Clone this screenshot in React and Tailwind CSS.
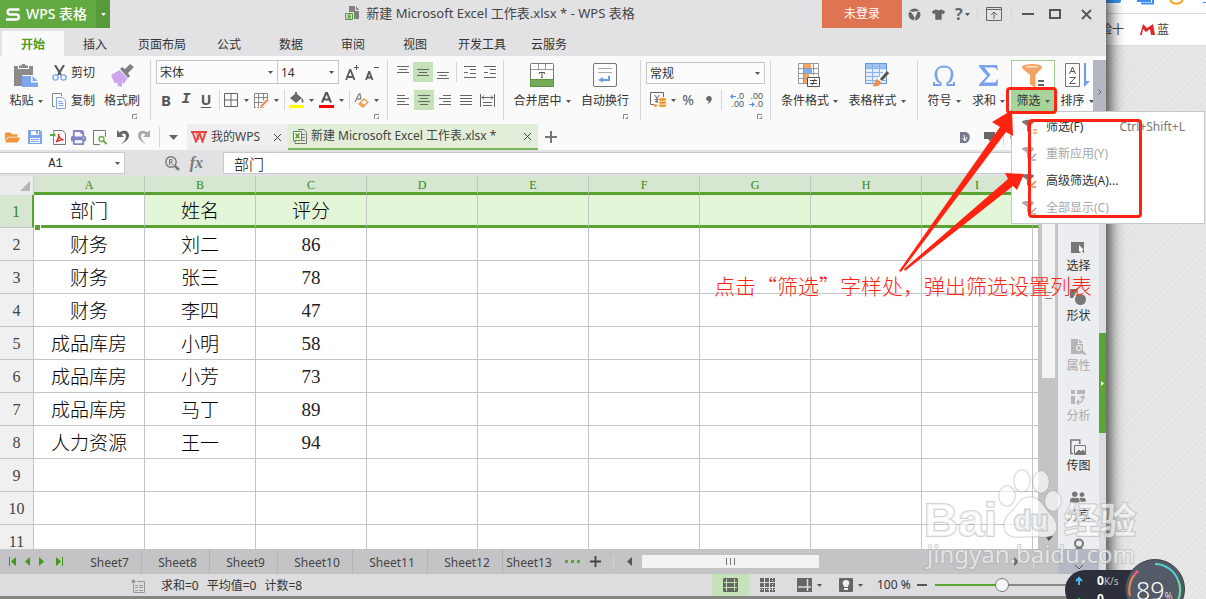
import clsx from "clsx";
import {
  FaFolderOpen,
  FaPrint,
  FaTshirt,
  FaUserFriends,
} from "react-icons/fa";

const MENU_TABS = [
  { name: "开始", width: "w-[62px]" },
  { name: "插入", width: "w-[62px]" },
  { name: "页面布局", width: "w-[72px]" },
  { name: "公式", width: "w-[62px]" },
  { name: "数据", width: "w-[62px]" },
  { name: "审阅", width: "w-[62px]" },
  { name: "视图", width: "w-[62px]" },
  { name: "开发工具", width: "w-[72px]" },
  { name: "云服务", width: "w-[62px]" },
];

const COLUMNS = ["A", "B", "C", "D", "E", "F", "G", "H", "I", ""];

const ROWS = [
  ["部门", "姓名", "评分"],
  ["财务", "刘二", "86"],
  ["财务", "张三", "78"],
  ["财务", "李四", "47"],
  ["成品库房", "小明", "58"],
  ["成品库房", "小芳", "73"],
  ["成品库房", "马丁", "89"],
  ["人力资源", "王一", "94"],
  [],
  [],
  [],
];

const SHEETS = [
  "Sheet7",
  "Sheet8",
  "Sheet9",
  "Sheet10",
  "Sheet11",
  "Sheet12",
  "Sheet13",
];

/* Small shared pieces */

const Caret = ({ className }) => (
  <svg
    width="5"
    height="3"
    viewBox="0 0 5 3"
    className={clsx("shrink-0", className ?? "text-[#555]")}
  >
    <path d="M0 0h5L2.5 3z" fill="currentColor" />
  </svg>
);

const Group = ({ className, children }) => (
  <div
    className={clsx(
      "flex h-[60px] shrink-0 border-r border-[#d5d5d7]",
      className
    )}
  >
    {children}
  </div>
);

const Divider = ({ className }) => (
  <span className={clsx("w-px shrink-0 bg-[#d5d5d7]", className)} />
);

const Expander = () => (
  <div className="flex h-1.5 justify-end pr-2">
    <button aria-label="更多设置" className="h-[5px] w-[5px]">
      <svg width="5" height="5" viewBox="0 0 5 5" fill="none" stroke="#888">
        <path d="M.5 5V.5H5M2.5 4.5h2v-2" />
      </svg>
    </button>
  </div>
);

const BigButton = ({ label, icon, caret, width, active }) => (
  <button className={clsx("flex shrink-0 flex-col items-center", width)}>
    <span
      className={clsx(
        "flex h-7 w-full items-center justify-center pt-0.5",
        active && "border border-b-0 border-[#a3cf92] bg-white"
      )}
    >
      {icon}
    </span>
    <span
      className={clsx(
        "flex h-[26px] w-full items-center justify-center gap-1 whitespace-nowrap",
        active && "bg-[#a8d39a]"
      )}
    >
      {label}
      {caret && <Caret />}
    </span>
  </button>
);

const DropIcon = ({ label, children }) => (
  <button
    aria-label={label}
    className="flex h-5 w-[30px] shrink-0 items-center justify-between pr-[5px]"
  >
    {children}
    <Caret />
  </button>
);

const Combo = ({ label, value, className }) => (
  <div
    className={clsx(
      "flex shrink-0 items-center border border-[#c6c6c8] bg-[#fcfcfc] pr-1 pl-[3px]",
      className
    )}
  >
    <select
      aria-label={label}
      className="min-w-0 flex-1 appearance-none bg-transparent pt-0.5 outline-none"
    >
      <option>{value}</option>
    </select>
    <Caret />
  </div>
);

const Lines = ({ rows, className }) => (
  <svg
    width="14"
    height="14"
    viewBox="0 0 14 14"
    stroke="#666"
    fill="none"
    className={className}
  >
    {rows.map(([x1, x2, y]) => (
      <path key={y} d={`M${x1} ${y}.5H${x2}`} />
    ))}
  </svg>
);

const LineButton = ({ label, rows, active }) => (
  <button
    aria-label={label}
    className={clsx(
      "flex size-5 shrink-0 items-center justify-center",
      active && "bg-[#c5e2b8]"
    )}
  >
    <Lines rows={rows} />
  </button>
);

/* Ribbon drawings */

const PasteIcon = () => (
  <svg width="24" height="23" viewBox="0 0 24 23">
    <path
      fill="#8b8b8b"
      d="M0 2h4v3h11V2h4v9H8v11H0zM5 1.500h2.500a2 2 0 0 1 4 0H14V4H5z"
    />
    <path fill="#7fa5ee" d="M8 12h9v6.500h7V23H8z" />
    <path fill="#7fa5ee" d="M18.500 12l5 5h-5z" />
  </svg>
);

const CutIcon = () => (
  <svg width="15" height="16" viewBox="0 0 15 16" fill="none">
    <path stroke="#555" strokeWidth="2" d="M3 0l6 10M12 0L6 10" />
    <circle cx="3.500" cy="12.500" r="2.600" stroke="#7fa5ee" strokeWidth="1.400" />
    <circle cx="11.500" cy="12.500" r="2.600" stroke="#7fa5ee" strokeWidth="1.400" />
  </svg>
);

const CopyIcon = () => (
  <svg width="15" height="16" viewBox="0 0 15 16" fill="none">
    <path stroke="#888" d="M3 13.500H.5V.5h9V3" />
    <path stroke="#7fa5ee" d="M4.500 4.500h6l3 3v8h-9zM6.500 8.500h4M6.500 10.500h5M6.500 12.500h5" />
  </svg>
);

const BrushIcon = () => (
  <svg width="23" height="23" viewBox="0 0 23 23">
    <path fill="#808080" d="M9 5l2-2 3 2 5-5 4 3-6 6 2 3-2 2z" />
    <path fill="#cda6ef" d="M8.500 6l8 8.500-4 5.500-1.500-2 0 5-4-1-1-3-2.500 0L0 11z" />
  </svg>
);

const FontSizeIcon = ({ plus }) => (
  <svg width="14" height="16" viewBox="0 0 14 16" fill="none" stroke="#5a5a5a">
    {plus ? (
      <path strokeWidth="1.800" d="M1 15L5 5h.5l4 10M3 12h5" />
    ) : (
      <path strokeWidth="1.800" d="M1 15l3-8h.5l3 8M2 12.500h5" />
    )}
    <path d={plus ? "M9 2.500h5M11.500 0v5" : "M9 2.500h5"} />
  </svg>
);

const BordersIcon = () => (
  <svg width="14" height="14" viewBox="0 0 14 14" fill="none" stroke="#666">
    <path d="M.5.5h13v13H.5zM7 .5v13M.5 7h13" />
  </svg>
);

const DrawTableIcon = () => (
  <svg width="15" height="15" viewBox="0 0 15 15" fill="none">
    <path
      stroke="#888"
      d="M.5 14V.5h13V6M.5 4.500h13M.5 9.500h8M4.500.5v13M9.500.5v7"
    />
    <path stroke="#ee8443" strokeWidth="2" d="M7 13.500l7-7" />
    <path stroke="#ee8443" strokeDasharray="2 1" d="M0 14.500h10" />
  </svg>
);

const FillIcon = () => (
  <svg width="15" height="16" viewBox="0 0 15 16">
    <path fill="#6a6a6a" d="M1 6l5-4V0h2v2l5 4-6 5zM13 6c2 2 2 4 .5 5-1.500-1-1-3-.5-5z" />
    <path fill="#ff0" d="M0 13h15v3H0z" />
  </svg>
);

const FontColorIcon = () => (
  <svg width="15" height="16" viewBox="0 0 15 16" fill="none">
    <path stroke="#555" strokeWidth="2" d="M3 10.500L7 1h1l4 9.500M5 7.500h5" />
    <path fill="#f00" d="M0 13h15v3H0z" />
  </svg>
);

const ClearFormatIcon = () => (
  <svg width="15" height="15" viewBox="0 0 15 15" fill="none">
    <path stroke="#888" strokeWidth="1.300" d="M1 9l4-8h1l1 5M3 6h4" />
    <path fill="#fff" stroke="#eea04d" strokeWidth="1.400" d="M5 11l5-5 4 3-5 5z" />
    <path fill="#eea04d" d="M7 9l4 3.500-2 1.500-4-3z" />
  </svg>
);

const MergeIcon = () => (
  <svg width="24" height="24" viewBox="0 0 24 24" fill="none">
    <rect x=".5" y=".5" width="23" height="23" rx="1" stroke="#777" fill="#fff" />
    <path stroke="#999" d="M8.500 1v6M15.500 1v6M1 6.500h22" />
    <path stroke="#555" d="M9.500 11V9.500h5V11M12 9.500v5M11 14.500h2" />
    <path fill="#74ad55" stroke="#5d9440" d="M.5 16.500h23v7H.5z" />
  </svg>
);

const WrapIcon = () => (
  <svg width="24" height="24" viewBox="0 0 24 24" fill="none">
    <rect x=".5" y=".5" width="23" height="23" rx="1.500" stroke="#777" fill="#fff" />
    <path stroke="#aaa" d="M5 5.500h14M5 9.500h14" />
    <path fill="#6f9af0" d="M15 13h2v5h-7v1.500L5 17l5-3v2h5z" />
  </svg>
);

const CurrencyIcon = () => (
  <svg width="17" height="16" viewBox="0 0 17 16" fill="none">
    <path stroke="#666" d="M7 12.500H.5V.5h13V5M4.500 3l2.500 3 2.500-3M7 6v5M5 7.500h4M5 9.500h3" />
    <g fill="#f0962d" stroke="#fafafa" strokeWidth=".6">
      <ellipse cx="12.500" cy="13.500" rx="4" ry="1.900" />
      <ellipse cx="12.500" cy="10.500" rx="4" ry="1.900" />
      <ellipse cx="12.500" cy="7.500" rx="4" ry="1.900" />
      <ellipse cx="5.500" cy="13.500" rx="2" ry="1.600" />
    </g>
  </svg>
);

const Arrow = ({ right }) => (
  <svg width="6" height="5" viewBox="0 0 6 5" fill="#5b8def">
    <path d={right ? "M0 2h3V0l3 2.500L3 5V3H0z" : "M6 2H3V0L0 2.500 3 5V3h3z"} />
  </svg>
);

const DecimalIcon = ({ more }) => (
  <span className="flex w-[19px] shrink-0 flex-col items-end font-['Liberation_Sans'] text-[9px] leading-[8px] text-[#555]">
    <span className="flex items-center">
      {more && <Arrow />}
      {more ? ".0" : ".00"}
    </span>
    <span className="flex items-center">
      {!more && <Arrow right />}
      {more ? ".00" : ".0"}
    </span>
  </span>
);

const CondFormatIcon = () => (
  <svg width="23" height="24" viewBox="0 0 23 24" fill="none">
    <path stroke="#999" fill="#fff" d="M.5.5h20v20H.5z" />
    <path fill="#f6a467" d="M6 1h7v4H6zM6 11h5v5H6zM6 16h4v4H6z" />
    <path fill="#7fb0f5" d="M6 6h8v4H6z" />
    <path stroke="#999" d="M.5 5.500h20M.5 10.500h20M.5 15.500h8M5.500.5v20M15.500.5v12" />
    <path stroke="#555" fill="#fff" d="M9.500 14.500h12v9h-12z" />
    <path stroke="#444" d="M12 17.500h7M12 20.500h7M17 16l-3 6" />
  </svg>
);

const TableStyleIcon = () => (
  <svg width="24" height="24" viewBox="0 0 24 24" fill="none">
    <path stroke="#5f96e8" fill="#e4eefc" d="M.5.5h21v20H.5z" />
    <path fill="#9dc0f5" d="M1 1h20v4H1z" />
    <path stroke="#8ab2ef" d="M.5 5.500h21M.5 9.500h21M.5 13.500h21M.5 17.500h21M7.500.5v20M14.500.5v20" />
    <path stroke="#fafafa" strokeWidth="5" d="M22 9l-9 10" />
    <path stroke="#555" strokeWidth="3" d="M23 9l-7 8" />
    <path fill="#ee8e4c" d="M12 16l4 3c0 3-3 5-9 4 3-1 2-5 5-7z" />
  </svg>
);

const OmegaIcon = () => (
  <svg width="22" height="21" viewBox="0 0 22 21" fill="none" stroke="#7ba2f0">
    <path strokeWidth="2" d="M1 17v3h6.500v-2C4 16 2.500 13 2.500 9.500 2.500 4.500 6 1.500 11 1.500s8.500 3 8.500 8c0 3.500-1.500 6.500-5 8.500v2H21v-3" />
    <path strokeWidth="1.500" d="M4 5.500c-1 4-.5 8 2 11M18 5.500c1 4 .5 8-2 11" />
  </svg>
);

const SigmaIcon = () => (
  <svg width="20" height="21" viewBox="0 0 20 21">
    <path fill="#7ba2f0" d="M0 0h18l1 5h-1c-1-2-2-2.500-4-2.500H5.500l6 7.500-6.500 7.500h9c2 0 3-.5 4-3h1L18.500 21H0v-1.500L8 11 0 1.500z" />
  </svg>
);

const FunnelIcon = () => (
  <svg width="23" height="24" viewBox="0 0 23 24">
    <path fill="#f2a262" d="M0 3c0-4 20-4 20 0 0 2-3 3.500-6.500 8v13L8 20v-9C4 7 0 5.500 0 3z" />
    <path fill="#f9d3b0" d="M3 3c1-2 13-2 14 0-3 1.500-11 1.500-14 0z" />
    <path fill="#666" d="M16 16h6v2h-6zM16 20h6v2h-6z" />
  </svg>
);

const SortIcon = () => (
  <svg width="25" height="24" viewBox="0 0 25 24" fill="none">
    <path stroke="#777" fill="#fff" d="M.5.5h14v23H.5z" />
    <path stroke="#555" d="M4.500 11l3-7 3 7M5.500 8.500h4M4.500 14.500h6l-6 6h6" />
    <path stroke="#6f9af0" strokeWidth="2" d="M20 0v20" />
    <path fill="#6f9af0" d="M19 18h6l-6 6z" />
  </svg>
);

const GreyFunnel = ({ mark }) => (
  <svg width="16" height="14" viewBox="0 0 16 14">
    <path fill="currentColor" d="M0 1.800C0-.6 12-.6 12 1.800c0 1.200-2 2.200-4 4V13l-3-2V6C3 4 0 3 0 1.800z" />
    <path
      fill="none"
      stroke={mark.color}
      strokeWidth="1.500"
      d={mark.equals ? "M11 10h4M11 13h4" : "M9 12l5-5M10 13h4"}
    />
  </svg>
);

/* Title bar with login and window buttons */
const TitleBar = () => (
  <header className="flex h-7 shrink-0 items-center bg-[#e2e2e4]">
    <button className="flex h-7 items-center bg-[#63a941] text-[14px] text-white">
      <span className="flex h-full w-24 items-center gap-1.5 pl-1.5 font-medium">
        <svg width="14" height="13" viewBox="0 0 14 13" fill="none">
          <path
            stroke="#fff"
            strokeWidth="2.500"
            d="M13.500 1.500H4C1 1.500 1 6.500 4 6.500h6.500c3 0 3 5 0 5H0"
          />
        </svg>
        <span className="whitespace-nowrap">WPS 表格</span>
      </span>
      <span className="flex h-full w-3.5 items-center justify-center bg-[#589a3a]">
        <Caret className="text-white" />
      </span>
    </button>
    <div className="flex flex-1 items-center justify-center gap-1.5 pl-12 text-[13px] text-[#444]">
      <svg width="15" height="15" viewBox="0 0 15 15" fill="none">
        <path fill="#808080" d="M4 0h6v5h4v8H9V6H4z M11 0l3 4h-3z" />
        <path stroke="#4f9a2c" fill="#e2e2e4" d="M.5 7.500h7v6h-7z" />
        <path stroke="#4f9a2c" d="M6 9H3v1.500h2.500V12H2" />
      </svg>
      <h1>新建 Microsoft Excel 工作表.xlsx * - WPS 表格</h1>
    </div>
    <button className="h-7 w-20 bg-[#df7453] text-white">未登录</button>
    <div className="flex h-7 w-[204px] items-center pl-1.5 text-[#666]">
      <button aria-label="皮肤中心" className="w-6">
        <svg width="13" height="13" viewBox="0 0 13 13">
          <circle cx="6.500" cy="6.500" r="6" fill="#666" />
          <path fill="#e2e2e4" d="M3 4l7-1-3 7z" />
          <path stroke="#e2e2e4" d="M0 3l4 1M10 3l3 1M7 10l-1 3" />
        </svg>
      </button>
      <button aria-label="皮肤" className="w-6">
        <FaTshirt size={13} />
      </button>
      <button
        aria-label="帮助"
        className="flex w-[22px] items-center gap-0.5 text-base font-bold"
      >
        ? <Caret />
      </button>
      <Divider className="h-3.5 bg-[#aaa]" />
      <button aria-label="折叠功能区" className="flex w-[34px] justify-center">
        <svg width="16" height="14" viewBox="0 0 16 14" fill="none" stroke="#666">
          <path d="M.5.5h15v13H.5zM.5 2.500h15M8 12V5M5 8l3-3 3 3" />
        </svg>
      </button>
      <Divider className="h-3.5 bg-[#aaa]" />
      <button aria-label="最小化" className="flex w-8 justify-center">
        <span className="h-0.5 w-3 bg-[#555]" />
      </button>
      <button aria-label="最大化" className="flex w-6 justify-center">
        <span className="h-2.5 w-3 border-2 border-[#555]" />
      </button>
      <button aria-label="关闭" className="flex w-10 justify-center">
        <svg width="11" height="11" viewBox="0 0 11 11" stroke="#555" strokeWidth="1.800">
          <path d="M1 1l9 9M10 1l-9 9" />
        </svg>
      </button>
    </div>
  </header>
);

const MenuTabs = () => (
  <nav className="flex h-7 shrink-0 items-end bg-[#e2e2e4] pl-0.5">
    {MENU_TABS.map((tab, i) => (
      <button
        key={tab.name}
        className={clsx(
          "h-[25px] shrink-0 pt-0.5",
          tab.width,
          i === 0 && "bg-[#fafafa] font-bold text-[#4c9a24]"
        )}
      >
        {tab.name}
      </button>
    ))}
  </nav>
);

const Ribbon = () => (
  <div className="flex h-[68px] shrink-0 overflow-hidden bg-[#fafafa] pt-1">
    {/* Clipboard */}
    <Group className="w-[151px] pl-[5px]">
      <BigButton label="粘贴" icon={<PasteIcon />} caret width="w-[42px]" />
      <div className="flex w-[52px] flex-col pl-[5px]">
        <button className="flex h-[26px] items-center gap-1 whitespace-nowrap">
          <CutIcon /> 剪切
        </button>
        <button className="flex h-[30px] items-center gap-1 whitespace-nowrap">
          <CopyIcon /> 复制
        </button>
      </div>
      <div className="flex flex-col">
        <BigButton label="格式刷" icon={<BrushIcon />} width="w-[46px]" />
        <Expander />
      </div>
    </Group>

    {/* Font */}
    <Group className="w-[237px] flex-col pl-[5px]">
      <div className="flex h-[26px]">
        <Combo label="字体" value="宋体" className="h-6 w-[122px]" />
        <Combo label="字号" value="14" className="h-6 w-[61px] border-l-0" />
        <button aria-label="增大字号" className="ml-1.5">
          <FontSizeIcon plus />
        </button>
        <button aria-label="减小字号" className="ml-1.5">
          <FontSizeIcon />
        </button>
      </div>
      <div className="flex h-7 items-center text-[#555]">
        <button className="w-5 text-[15px] font-bold">B</button>
        <button className="w-5 font-['Liberation_Mono'] text-[15px] font-bold italic">
          I
        </button>
        <button className="w-5 text-sm font-bold underline underline-offset-2">
          U
        </button>
        <Divider className="mr-1 ml-[3px] h-5" />
        <DropIcon label="边框">
          <BordersIcon />
        </DropIcon>
        <DropIcon label="绘制表格">
          <DrawTableIcon />
        </DropIcon>
        <Divider className="mr-1 h-5" />
        <DropIcon label="填充颜色">
          <FillIcon />
        </DropIcon>
        <DropIcon label="字体颜色">
          <FontColorIcon />
        </DropIcon>
        <Divider className="mr-1 h-5" />
        <DropIcon label="清除格式">
          <ClearFormatIcon />
        </DropIcon>
      </div>
      <Expander />
    </Group>

    {/* Alignment */}
    <Group className="w-[116px] flex-col pl-[5px]">
      <div className="flex h-6 items-center">
        <LineButton label="顶端对齐" rows={[[1, 13, 1], [3, 11, 4], [1, 13, 7]]} />
        <LineButton label="垂直居中" active rows={[[1, 13, 4], [3, 11, 7], [1, 13, 10]]} />
        <LineButton label="底端对齐" rows={[[1, 13, 7], [3, 11, 10], [1, 13, 13]]} />
        <Divider className="mx-[3px] h-5" />
        <LineButton
          label="减少缩进"
          rows={[[1, 13, 1], [7, 13, 4], [1, 5, 7], [7, 13, 8], [1, 13, 12]]}
        />
        <LineButton
          label="增加缩进"
          rows={[[1, 13, 1], [7, 13, 4], [1, 5, 7], [7, 13, 8], [1, 13, 12]]}
        />
      </div>
      <div className="flex h-8 items-center gap-px">
        <LineButton label="左对齐" rows={[[1, 9, 2], [1, 13, 5], [1, 9, 8], [1, 13, 11]]} />
        <LineButton label="居中" active rows={[[1, 13, 2], [3, 11, 5], [1, 13, 8], [3, 11, 11]]} />
        <LineButton label="右对齐" rows={[[5, 13, 2], [1, 13, 5], [5, 13, 8], [1, 13, 11]]} />
        <LineButton label="两端对齐" rows={[[1, 13, 2], [1, 13, 5], [1, 13, 8], [1, 13, 11]]} />
        <button aria-label="分散对齐" className="flex size-5 items-center justify-center">
          <svg width="15" height="13" viewBox="0 0 15 13" fill="none" stroke="#666">
            <path d="M.5 0v13M14.500 0v13M2 3.500h11M4 1.500l-2 2 2 2M11 1.500l2 2-2 2M3 8.500h9M3 11.500h9" />
          </svg>
        </button>
      </div>
    </Group>

    {/* Merge and wrap */}
    <Group className="w-[137px] pl-1.5">
      <BigButton label="合并居中" icon={<MergeIcon />} caret width="w-[64px]" />
      <div className="flex flex-col">
        <BigButton label="自动换行" icon={<WrapIcon />} width="w-[62px]" />
        <Expander />
      </div>
    </Group>

    {/* Number */}
    <Group className="w-[130px] flex-col pl-[5px]">
      <div className="flex h-[26px] items-center">
        <Combo label="数字格式" value="常规" className="h-[22px] w-[119px]" />
      </div>
      <div className="flex h-7 items-center pl-1 text-[#555]">
        <button aria-label="货币" className="flex w-[29px] items-center gap-1">
          <CurrencyIcon />
          <Caret />
        </button>
        <button className="w-[18px] text-sm">%</button>
        <button aria-label="千位分隔" className="flex w-6 justify-center">
          <svg width="6" height="8" viewBox="0 0 6 8">
            <path fill="#666" d="M3 0c4 0 4 6-2 8 1-1 2-2 1.500-3C-1 5-.5 0 3 0z" />
          </svg>
        </button>
        <Divider className="mr-[3px] h-5" />
        <button aria-label="增加小数位">
          <DecimalIcon more />
        </button>
        <button aria-label="减少小数位">
          <DecimalIcon />
        </button>
      </div>
      <Expander />
    </Group>

    {/* Styles */}
    <Group className="w-[147px] pl-[5px]">
      <BigButton label="条件格式" icon={<CondFormatIcon />} caret width="w-[67px]" />
      <BigButton label="表格样式" icon={<TableStyleIcon />} caret width="w-[68px]" />
    </Group>

    {/* Editing */}
    <div className="flex min-w-0 flex-1 overflow-hidden pl-1">
      <BigButton label="符号" icon={<OmegaIcon />} caret width="w-11" />
      <BigButton label="求和" icon={<SigmaIcon />} caret width="w-[45px]" />
      <BigButton label="筛选" icon={<FunnelIcon />} caret active width="w-11" />
      <BigButton label="排序" icon={<SortIcon />} caret width="w-11" />
    </div>
    <button
      aria-label="更多功能"
      className="flex w-[13px] shrink-0 items-center justify-center bg-[#b4b7c2] text-[#666]"
    >
      <svg width="4" height="6" viewBox="0 0 4 6" fill="none" stroke="#666">
        <path d="M.5.5L3 3 .5 5.500" />
      </svg>
    </button>
  </div>
);

const CloseButton = () => (
  <button aria-label="关闭标签" className="mr-1.5 shrink-0">
    <svg width="9" height="9" viewBox="0 0 9 9" stroke="#444" fill="none">
      <path d="M1 1l7 7M8 1L1 8" />
    </svg>
  </button>
);

const PlusIcon = ({ size, color }) => (
  <svg width={size} height={size} viewBox="0 0 12 12" stroke={color} strokeWidth="2">
    <path d="M6 0v12M0 6h12" />
  </svg>
);

const TurnIcon = () => (
  <svg width="13" height="14" viewBox="0 0 13 14">
    <path fill="currentColor" d="M1 0v7h7L5.500 4.500C8 2.500 10 4 10 6.500 10 9 8 11.500 5 14c5-2 8-5 8-8.500C13 1 8-1 3.500 2.500z" />
  </svg>
);

/* Quick access icons and the open documents */
const DocumentTabs = () => (
  <div className="flex h-[26px] shrink-0 items-center bg-[#fafafa]">
    <div className="flex w-[187px] shrink-0 items-center pl-[5px]">
      <button aria-label="打开" className="w-[23px] text-[#f0953a]">
        <FaFolderOpen size={15} />
      </button>
      <button aria-label="保存" className="w-[22px]">
        <svg width="14" height="14" viewBox="0 0 14 14">
          <path fill="#7fa5ee" d="M0 0h12l2 2v12H0z" />
          <path fill="#fafafa" d="M3 1h8v4H3zM2 8h10v5H2z" />
          <path fill="#7fa5ee" d="M8 1h2v3H8zM3 9h8v1H3zM3 11h8v1H3z" />
        </svg>
      </button>
      <button aria-label="输出为PDF" className="w-[21px]">
        <svg width="16" height="15" viewBox="0 0 16 15" fill="none">
          <path stroke="#777" d="M3.500 2V.5h9l3 3v11h-12V8" />
          <path stroke="#e02a2a" strokeWidth="1.300" d="M6 12c2-2 3-5 2.500-8 0 3 2 5 5 6-3-.5-5 .5-7.500 2z" />
          <path fill="#5aa637" d="M0 4h3V2l3 3-3 3V6H0z" />
        </svg>
      </button>
      <button aria-label="打印" className="w-[22px] text-[#8585c6]">
        <FaPrint size={15} />
      </button>
      <button aria-label="打印预览" className="w-[23px]">
        <svg width="14" height="15" viewBox="0 0 14 15" fill="none">
          <path stroke="#777" d="M7 14.500H.5V.5h12V7" />
          <circle cx="8.500" cy="9" r="2.500" stroke="#6cab4a" strokeWidth="1.300" />
          <path stroke="#6cab4a" strokeWidth="2" d="M10.500 11l3 3" />
        </svg>
      </button>
      <button aria-label="撤销" className="w-[22px] text-[#666]">
        <TurnIcon />
      </button>
      <button aria-label="恢复" className="w-[21px] text-[#aaa]">
        <span className="block w-[13px] -scale-x-100">
          <TurnIcon />
        </span>
      </button>
      <Divider className="h-5" />
      <button aria-label="自定义" className="flex flex-1 justify-center">
        <svg width="9" height="5" viewBox="0 0 9 5">
          <path fill="#666" d="M0 0h9L4.500 5z" />
        </svg>
      </button>
    </div>
    <div className="flex h-full w-[101px] shrink-0 items-center gap-1 bg-[#eeeeef] pl-1 text-[#444]">
      <svg width="16" height="12" viewBox="0 0 16 12" fill="none" stroke="#e84545">
        <path strokeWidth="2" d="M0 1h16M1.500 1L5 10.500 8.500 2l3 8.500L14.500 1" />
        <path d="M5 1l3 8" />
      </svg>
      <span className="flex-1 whitespace-nowrap text-[12px]">我的WPS</span>
      <CloseButton />
    </div>
    <div className="flex h-full w-[250px] shrink-0 items-center gap-1 border-b-2 border-[#7ab65c] bg-[#e2eeda] pl-[5px] text-[#444]">
      <svg width="14" height="15" viewBox="0 0 14 15" fill="none">
        <path stroke="#777" d="M5 .5h6l2.500 3v11H2V12M9 5.500h3M9 8.500h3M9 11.500h3" />
        <path fill="#fff" stroke="#4f9a2c" d="M.5 2.500h8v9h-8z" />
        <path stroke="#4f9a2c" strokeWidth="1.500" d="M2.500 4.500l4 5M6.500 4.500l-4 5" />
      </svg>
      <span className="flex-1 whitespace-nowrap text-[12px]">
        新建 Microsoft Excel 工作表.xlsx *
      </span>
      <CloseButton />
    </div>
    <button aria-label="新建文档" className="ml-[7px]">
      <PlusIcon size={12} color="#777" />
    </button>
    <div className="ml-auto flex items-center pr-[84px] text-[#777]">
      <svg width="10" height="11" viewBox="0 0 10 11">
        <path fill="#777a8a" d="M0 0h6c5 1 5 9 0 11H0z" />
        <path fill="none" stroke="#fff" d="M5 9L4 3M2.500 6L5 9l2-4" />
      </svg>
      <svg width="11" height="10" viewBox="0 0 11 10" className="mr-2 ml-3.5">
        <path fill="#666" d="M0 0h11v7H7v3L4 7H0z" />
      </svg>
      <Divider className="h-4" />
      <svg width="12" height="12" viewBox="0 0 12 12" fill="none" className="ml-1.5">
        <circle cx="6" cy="6" r="5" stroke="#777" strokeWidth="1.500" />
      </svg>
    </div>
  </div>
);

const FormulaBar = () => (
  <div className="flex h-[26px] shrink-0 items-center bg-[#e2e2e4]">
    <div className="flex h-[22px] w-[125px] shrink-0 items-center border border-l-0 border-[#cbcbcd] bg-white pr-1">
      <input
        aria-label="名称框"
        defaultValue="A1"
        className="w-0 flex-1 pt-0.5 pr-1 text-center font-['Liberation_Mono'] text-xs text-[#333] outline-none"
      />
      <Caret />
    </div>
    <div className="flex w-[98px] shrink-0 items-center justify-end gap-2.5 pr-5 text-[#777]">
      <svg width="15" height="15" viewBox="0 0 15 15" fill="none" stroke="currentColor">
        <circle cx="6" cy="6" r="5.200" strokeWidth="1.400" />
        <path d="M4.500 9V3.500h2.500v2.500H4.500M6 6l2 3" />
        <path strokeWidth="2.500" d="M10 10l4 4" />
      </svg>
      <button className="font-['Liberation_Serif'] text-base font-bold italic">
        fx
      </button>
    </div>
    <input
      aria-label="编辑栏"
      defaultValue="部门"
      className="h-[22px] min-w-0 flex-1 border border-[#cbcbcd] bg-white pl-2.5 text-[15px] font-light text-black outline-none"
    />
  </div>
);

const Grid = () => (
  <div className="relative min-w-0 flex-1 overflow-hidden bg-white">
    <table className="w-full table-fixed border-separate border-spacing-0 text-center">
      <colgroup>
        <col className="w-[34px]" />
        {COLUMNS.map((name) => (
          <col key={name} className={name ? "w-[111px]" : ""} />
        ))}
      </colgroup>
      <thead>
        <tr className="h-[19px] bg-[#d6e6d0] font-['Liberation_Serif'] text-xs leading-[14px] text-[#338a0c]">
          <th className="border-r border-[#d0d0d2] bg-[#ececee] p-0">
            <svg width="10" height="10" viewBox="0 0 10 10" className="ml-5">
              <path fill="#b5b5b5" d="M10 0v10H0z" />
            </svg>
          </th>
          {COLUMNS.map((name) => (
            <th
              key={name}
              className="border-r border-b-[3px] border-r-[#bfc9bb] border-b-[#5aa333] p-0 pt-0.5 font-normal"
            >
              {name}
            </th>
          ))}
        </tr>
      </thead>
      <tbody>
        {ROWS.map((row, r) => (
          <tr key={r} className="h-[33px] text-black">
            <th
              className={clsx(
                "border-r border-b p-0 pt-0.5 font-['Liberation_Serif'] text-base font-normal",
                r === 0
                  ? "border-r-2 border-[#5aa333] border-b-[#c8c8ca] bg-[#d6e6d0] text-[#338a0c]"
                  : "border-[#c4c4c6] bg-[#f0f0f1] text-[#444]"
              )}
            >
              {r + 1}
            </th>
            {COLUMNS.map((name, c) => (
              <td
                key={name}
                className={clsx(
                  "border-r border-[#c4c4c6] p-0 pt-0.5 leading-5",
                  r === 0 ? "border-b-[3px] border-b-[#5aa333]" : "border-b",
                  r === 0 && c > 0 && "bg-[#e3f6d8]",
                  c === 2 && r > 0
                    ? "font-['Liberation_Serif'] text-[19px] text-[#222]"
                    : "text-[19px] font-light"
                )}
              >
                {row[c]}
              </td>
            ))}
          </tr>
        ))}
      </tbody>
    </table>
    {/* Fill handle */}
    <span className="absolute top-12 left-[34px] size-[7px] border border-white bg-[#5aa333]" />
  </div>
);

const VerticalScroll = () => (
  <div className="flex w-[19px] shrink-0 flex-col items-center bg-[#c4c4c6] pt-4">
    <div className="flex h-[186px] w-[13px] flex-col items-center justify-center gap-[5px] bg-[#f3f3f4] pt-5">
      <span className="h-px w-[7px] bg-[#888]" />
      <span className="h-px w-[7px] bg-[#888]" />
    </div>
    <svg width="8" height="5" viewBox="0 0 8 5" className="mt-auto mb-2">
      <path fill="#555" d="M0 0h8L4 5z" />
    </svg>
  </div>
);

const SIDE_ITEMS = [
  {
    name: "选择",
    icon: (
      <svg width="14" height="11" viewBox="0 0 14 11">
        <path fill="currentColor" d="M0 0h13v11H0z" />
        <path fill="#fff" d="M8 3l5 5h-2l1 3h-2l-1-2-1 1z" />
      </svg>
    ),
  },
  {
    name: "形状",
    icon: (
      <svg width="16" height="16" viewBox="0 0 16 16" fill="currentColor">
        <path d="M0 0h8L3 9H0z" />
        <circle cx="10.500" cy="10.500" r="5.500" />
      </svg>
    ),
  },
  {
    name: "属性",
    disabled: true,
    icon: (
      <svg width="15" height="16" viewBox="0 0 15 16">
        <path fill="currentColor" d="M0 0h7v5h5v10H0zM8 0l4 4H8z" />
        <circle cx="8" cy="9" r="2.500" fill="none" stroke="#fff" />
        <path stroke="currentColor" strokeWidth="2" d="M10 11l5 5" />
      </svg>
    ),
  },
  {
    name: "分析",
    disabled: true,
    icon: (
      <svg width="15" height="15" viewBox="0 0 15 15">
        <path fill="currentColor" d="M0 0h4v4H0zM6 0h8v4H6zM0 6h4v8H0z" />
        <path fill="none" stroke="currentColor" strokeWidth="1.500" d="M6 12c4 1 6 0 6-5M9 8l3-2 2 2M8 10l-2 2 2 3" />
      </svg>
    ),
  },
  {
    name: "传图",
    icon: (
      <svg width="16" height="16" viewBox="0 0 16 16" fill="none" stroke="currentColor">
        <path strokeWidth="1.500" d="M3 14.500H.8V1h9v4" />
        <path d="M4.500 6.500h11v9h-11z" />
        <path fill="currentColor" d="M5 15l4-4 2 2 2-2 2 3v1z" />
      </svg>
    ),
  },
  { name: "分享", icon: <FaUserFriends size={16} /> },
];

const SidePane = () => (
  <aside className="flex w-12 shrink-0 overflow-hidden">
    <div className="flex w-[41px] flex-col items-center bg-[#ecedf0] pt-[62px]">
      {SIDE_ITEMS.map((item) => (
        <button
          key={item.name}
          disabled={item.disabled}
          className={clsx(
            "flex h-[50px] shrink-0 flex-col items-center gap-px",
            item.disabled ? "text-[#aaa]" : "text-[#333]"
          )}
        >
          <span
            className={clsx(
              "flex h-[18px] items-center",
              item.disabled ? "text-[#b5b6b8]" : "text-[#777]"
            )}
          >
            {item.icon}
          </span>
          <span className="leading-[18px]">{item.name}</span>
        </button>
      ))}
      <button aria-label="定位" className="text-[#777]">
        <svg width="12" height="16" viewBox="0 0 12 16" fill="none" stroke="currentColor">
          <circle cx="6" cy="5.500" r="4" strokeWidth="2" />
          <path fill="currentColor" d="M3 10h6v5l-3-2-3 2z" />
        </svg>
      </button>
    </div>
    <div className="flex w-[7px] flex-col bg-[#dcdde0] pt-[157px]">
      <button
        aria-label="收起侧栏"
        className="flex h-[100px] items-center justify-center bg-[#5aa633]"
      >
        <svg width="3" height="5" viewBox="0 0 3 5">
          <path fill="#fff" d="M0 0l3 2.500L0 5z" />
        </svg>
      </button>
    </div>
  </aside>
);

const NavArrow = ({ d, label, className }) => (
  <button aria-label={label} className={className}>
    <svg width="8" height="9" viewBox="0 0 8 9">
      <path fill="currentColor" d={d} />
    </svg>
  </button>
);

const SheetBar = () => (
  <div className="flex h-[25px] shrink-0 items-center bg-[#c4c4c6] text-[#444]">
    <div className="flex w-[74px] shrink-0 items-center pl-2 text-[#419a15]">
      <NavArrow label="第一个" d="M1 0h1v9H1zM8 0v9L3 4.500z" />
      <NavArrow label="上一个" d="M6 0v9L1 4.500z" className="ml-2" />
      <NavArrow label="下一个" d="M1 0v9l5-4.500z" className="ml-1.5" />
      <NavArrow label="最后一个" d="M0 0v9l5-4.500zM6 0h1v9H6z" className="ml-2.5" />
    </div>
    {SHEETS.map((sheet, i) => (
      <button
        key={sheet}
        className={clsx(
          "h-full shrink-0 pt-0.5",
          i < 3 && "w-[68px]",
          i >= 3 && i < 6 && "w-[75px]",
          i < 6 ? "border-r border-[#b3b3b5] pl-1" : "w-[52px]"
        )}
      >
        {sheet}
      </button>
    ))}
    <button aria-label="更多工作表" className="ml-2.5 flex gap-[3px]">
      <span className="size-[3px] bg-[#5aa633]" />
      <span className="size-[3px] bg-[#5aa633]" />
      <span className="size-[3px] bg-[#5aa633]" />
    </button>
    <button aria-label="新建工作表" className="ml-2.5">
      <PlusIcon size={11} color="#444" />
    </button>
    <Divider className="ml-3 h-3.5 bg-[#888]" />
    <NavArrow label="向左" d="M6 0v9L1 4.500z" className="ml-3 text-[#555]" />
    <div className="ml-2 flex h-[13px] w-[177px] items-center justify-center gap-[3px] bg-[#f3f3f4]">
      <span className="h-[7px] w-px bg-[#777]" />
      <span className="h-[7px] w-px bg-[#777]" />
      <span className="h-[7px] w-px bg-[#777]" />
    </div>
    <NavArrow label="向右" d="M1 0v9l5-4.500z" className="ml-auto mr-3 text-[#666]" />
    <Divider className="mr-6 h-3.5 bg-[#999]" />
    <div className="flex h-full w-[41px] items-start justify-center bg-[#b4b8c6] pt-4">
      <svg width="8" height="5" viewBox="0 0 8 5" fill="none" stroke="#555">
        <path d="M0 0l4 4 4-4" />
      </svg>
    </div>
    <span className="h-full w-[7px] bg-[#dcdde0]" />
  </div>
);

const StatusBar = () => (
  <footer className="flex h-[22px] shrink-0 items-center bg-[#dddddf] text-[#333]">
    <div className="flex flex-1 items-center gap-2 pt-0.5 pl-[131px]">
      <svg width="15" height="14" viewBox="0 0 15 14" fill="none" stroke="#999">
        <path d="M2.500 5v8.500h11V2.500H6M4 6.500h3M8 6.500h4M4 8.500h3M8 8.500h4M4 11.500h3M8 11.500h4" />
        <circle cx="2.500" cy="2.500" r="2" fill="#999" stroke="none" />
      </svg>
      <span className="ml-[7px]">求和=0</span>
      <span>平均值=0</span>
      <span>计数=8</span>
    </div>
    <div className="flex h-full w-[394px] shrink-0 items-center">
      <button aria-label="普通视图" className="flex h-full w-[37px] items-center justify-center bg-[#c5e2b8]">
        <svg width="15" height="14" viewBox="0 0 15 14">
          <rect width="15" height="14" rx="1" fill="#666" />
          <path stroke="#c5e2b8" d="M3.500 1v12M11.500 1v12M1 4.500h13M1 9.500h13" />
        </svg>
      </button>
      <button aria-label="分页预览" className="flex w-[37px] justify-center">
        <svg width="15" height="14" viewBox="0 0 15 14">
          <path fill="#666" d="M0 0h15v14H0z" />
          <path stroke="#dddddf" d="M4.500 0v14M9.500 0v14M0 4.500h15M0 9.500h15" />
          <path stroke="#dddddf" strokeDasharray="1 1" d="M12.500 0v14M0 11.500h15" />
        </svg>
      </button>
      <button aria-label="阅读模式" className="ml-[11px] flex items-center gap-[5px]">
        <svg width="15" height="14" viewBox="0 0 15 14">
          <path fill="#666" d="M0 0h15v14H0z" />
          <path stroke="#dddddf" strokeWidth="1.500" d="M10.500 1v12M1 9h13" />
        </svg>
        <Caret />
      </button>
      <button aria-label="护眼模式" className="ml-[17px] flex items-center gap-[5px]">
        <svg width="14" height="14" viewBox="0 0 14 14">
          <rect width="14" height="14" rx="1" fill="#666" />
          <path fill="#eee" d="M7 2c4 0 4 4 2 6v1H5V8C3 6 3 2 7 2zM5 10h4v2H5z" />
        </svg>
        <Caret />
      </button>
      <span className="ml-3.5 w-10 whitespace-nowrap">100 %</span>
      <button aria-label="缩小" className="h-0.5 w-2.5 bg-[#555]" />
      <input
        type="range"
        aria-label="显示比例"
        defaultValue="50"
        className="ml-2 h-3.5 w-[134px] appearance-none bg-[linear-gradient(to_right,#5aa633_50%,#888_50%)] bg-[length:100%_2px] bg-center bg-no-repeat [&::-webkit-slider-thumb]:size-3.5 [&::-webkit-slider-thumb]:appearance-none [&::-webkit-slider-thumb]:rounded-full [&::-webkit-slider-thumb]:border [&::-webkit-slider-thumb]:border-[#777] [&::-webkit-slider-thumb]:bg-[#f6f6f6]"
      />
      <button aria-label="放大" className="ml-1.5">
        <PlusIcon size={10} color="#444" />
      </button>
    </div>
  </footer>
);

/* The browser that shows behind the spreadsheet window */
const Desktop = () => (
  <div className="flex w-[100px] shrink-0 flex-col bg-[#e5e5e5]">
    <div className="flex h-3.5 items-start gap-3 overflow-hidden border-b border-[#ddd] bg-white">
      <svg width="100" height="5" viewBox="0 0 100 5" fill="none">
        <path fill="#3c8ff0" d="M0 0h15v1a2 2 0 0 1-2 2H0z" />
        <path stroke="#3c8ff0" strokeWidth="2" d="M32 0v1h12V0M35 3.500h12V0" />
        <path stroke="#f5a623" strokeWidth="2" d="M64 0c3 5 10 5 13 0" />
        <path fill="#3c8ff0" d="M97 2h3v1h-3z" />
      </svg>
    </div>
    <div className="flex h-8 items-center border-b border-[#ddd] bg-white text-[#444]">
      <span className="flex w-[34px] justify-end overflow-hidden pr-4 whitespace-nowrap">
        险十
      </span>
      <svg width="15" height="11" viewBox="0 0 15 11">
        <path fill="#e0252b" d="M3 0l4 4 6-4 2 11h-4l-1-6-4 3-3-3-1 6H0z" />
      </svg>
      <span className="ml-0.5">蓝</span>
    </div>
    <div className="flex-1 bg-[repeating-linear-gradient(135deg,#e3e3e3_0,#e3e3e3_2px,#e8e8e8_2px,#e8e8e8_4px)]" />
  </div>
);

const FILTER_MENU = [
  {
    name: "筛选(F)",
    keys: "Ctrl+Shift+L",
    mark: { color: "#f2a262", equals: true },
  },
  { name: "重新应用(Y)", disabled: true, mark: { color: "#aaa" } },
  { name: "高级筛选(A)...", mark: { color: "#ee7c3a" } },
  { name: "全部显示(C)", disabled: true, mark: { color: "#aaa" } },
];

const FilterMenu = () => (
  <div className="absolute top-[111px] left-[1011px] flex w-[194px] flex-col border border-[#c8c8ca] bg-white pt-px pb-0.5">
    {FILTER_MENU.map((item) => (
      <button
        key={item.name}
        disabled={item.disabled}
        className={clsx(
          "flex h-[27px] items-center pr-[19px] pl-2.5 text-left",
          item.disabled ? "text-[#a8a8a8]" : "text-[#333]"
        )}
      >
        <span className={clsx("w-6", item.disabled ? "text-[#aaa]" : "text-[#777]")}>
          <GreyFunnel mark={item.mark} />
        </span>
        <span className="flex-1">{item.name}</span>
        <span className="text-[#777]">{item.keys}</span>
      </button>
    ))}
  </div>
);

/* Red arrows, frames and caption */
const Annotations = () => (
  <>
    <svg
      width="140"
      height="175"
      viewBox="0 0 140 175"
      fill="#ff2412"
      className="pointer-events-none absolute top-[100px] left-[895px]"
    >
      <path d="M117 10L97 22l8 5L4 171l2 1L111 32l7 4z" />
      <path d="M129 74l-19-1 3 6L9 169l1 2L118 86l4 4z" />
    </svg>
    <span className="pointer-events-none absolute top-[87px] left-[1006px] h-[27px] w-[51px] rounded-sm border-3 border-[#ff2412]" />
    <span className="pointer-events-none absolute top-[119px] left-[1028px] h-[99px] w-[114px] rounded-sm border-3 border-[#ff2412]" />
    <p className="absolute top-[270px] left-[714px] font-['Noto_Sans_CJK_SC',sans-serif] text-[21px] leading-[30px] font-light whitespace-nowrap text-[#ff2412]">
      点击“筛选”字样处，弹出筛选设置列表
    </p>
  </>
);

const Watermark = () => (
  <svg
    width="240"
    height="120"
    viewBox="0 0 240 120"
    className="pointer-events-none absolute right-[54px] bottom-[15px]"
    fill="#fff"
    fillOpacity=".65"
    stroke="#a8a8a8"
    strokeOpacity=".5"
    paintOrder="stroke"
  >
    <text x="12" y="72" fontSize="47" strokeWidth="2" className="font-['Liberation_Sans'] font-bold">
      Bai
    </text>
    <ellipse cx="95" cy="32" rx="8" ry="10" strokeWidth="1.500" />
    <ellipse cx="110" cy="17" rx="8" ry="11" strokeWidth="1.500" />
    <ellipse cx="129" cy="18" rx="8" ry="11" strokeWidth="1.500" />
    <ellipse cx="141" cy="37" rx="8" ry="10" strokeWidth="1.500" />
    <path
      strokeWidth="1.500"
      d="M118 33c-11 0-13 10-20 16-9 8-8 23 5 24 9 0 20-1 28 0 13 1 18-10 9-21-8-7-11-19-22-19z"
    />
    <text x="102" y="66" fontSize="28" strokeWidth="3" className="font-['Liberation_Sans'] font-bold">
      du
    </text>
    <text x="152" y="70" fontSize="36" strokeWidth="2" className="font-['Noto_Sans_CJK_SC'] font-bold">
      经验
    </text>
    <text x="15" y="99" fontSize="24" strokeWidth="2" className="font-['Noto_Sans']">
      jingyan.baidu.com
    </text>
  </svg>
);

/* Floating network speed meter */
const SpeedMeter = () => (
  <div className="absolute top-[559px] left-[1065px] h-10 w-[120px] overflow-hidden">
    <div className="mt-[11px] flex h-10 w-[90px] rounded-l-[20px] bg-[#2d303b] pt-1 pl-2.5 text-white">
      <svg width="8" height="32" viewBox="0 0 8 32" fill="none" strokeWidth="2">
        <path stroke="#4cb8f0" d="M4 11V5M1 7l3-3 3 3" />
        <path stroke="#3fc35c" d="M4 32v-7M1 28l3-3 3 3" />
      </svg>
      <span className="ml-3.5 flex flex-col leading-[14px]">
        <span>
          <b>0</b>
          <span className="text-[10px] text-[#bbb]">K/s</span>
        </span>
        <b className="mt-1">0</b>
      </span>
    </div>
    <div className="absolute top-0 left-[60px] size-[60px] rounded-full border border-[#3a3d47] bg-[#555a69]">
      <svg width="58" height="58" viewBox="0 0 58 58" fill="none" strokeWidth="2">
        <path stroke="#4adbd0" d="M29 4a25 25 0 0 1 23 16" />
        <path stroke="#6ee0a0" d="M52 20a25 25 0 0 1 0 20" />
        <path stroke="#f08a4a" d="M12 11A25 25 0 0 0 4 36" />
        <path stroke="#f0588a" d="M12 11a25 25 0 0 0-4 5" />
      </svg>
      <span className="absolute top-3.5 left-2.5 text-[25px] leading-8 font-light text-white">
        89<span className="text-[10px]">%</span>
      </span>
    </div>
  </div>
);

const App = () => {
  return (
    <div className="relative flex h-screen overflow-hidden bg-[#83877f] font-['Noto_Sans','Noto_Sans_CJK_SC',sans-serif] text-xs text-[#333]">
      <main className="z-10 flex min-w-0 flex-1 flex-col shadow-[0_0_14px_4px_rgba(0,0,0,0.75)]">
        <TitleBar />
        <MenuTabs />
        <Ribbon />
        <DocumentTabs />
        <FormulaBar />
        <div className="flex min-h-0 flex-1">
          <Grid />
          <VerticalScroll />
          <SidePane />
        </div>
        <SheetBar />
        <StatusBar />
        <div className="h-[3px] shrink-0 bg-[#83877f]" />
      </main>
      <Desktop />
      <div className="pointer-events-none absolute inset-0 z-20 overflow-hidden">
        <FilterMenu />
        <Annotations />
        <Watermark />
        <SpeedMeter />
      </div>
    </div>
  );
};

export default App;
